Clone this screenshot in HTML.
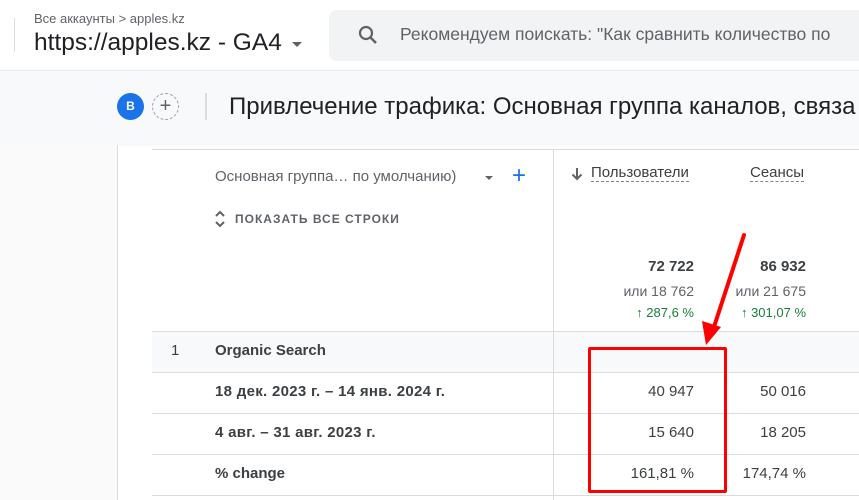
<!DOCTYPE html>
<html><head><meta charset="utf-8"><style>
body{margin:0;width:859px;height:500px;overflow:hidden;background:#fff;font-family:"Liberation Sans",Roboto,sans-serif;position:relative;color:#202124}
.a{position:absolute;white-space:nowrap}
.hl{position:absolute;background:#dadce0}
.num{position:absolute;text-align:right;font-size:15px;color:#3c4043}
</style></head><body>
<div class="hl" style="left:14px;top:18px;width:1px;height:34px"></div>
<div class="a" style="left:34px;top:11px;font-size:13px;color:#5f6368">Все аккаунты &gt; apples.kz</div>
<div class="a" style="left:34px;top:29px;font-size:24.5px;color:#202124">https://apples.kz - GA4</div>
<div class="a" style="left:292px;top:42px;width:0;height:0;border-left:5px solid transparent;border-right:5px solid transparent;border-top:5px solid #5f6368"></div>
<div class="a" style="left:329px;top:10px;width:540px;height:51px;background:#f1f3f4;border-radius:8px"></div>
<svg class="a" style="left:356px;top:23px" width="24" height="24" viewBox="0 0 24 24"><circle cx="10" cy="10" r="6" fill="none" stroke="#5f6368" stroke-width="2.2"/><path d="M14.5 14.5L20 20" stroke="#5f6368" stroke-width="2.5"/></svg>
<div class="a" style="left:400px;top:24px;font-size:17.5px;color:#5f6368">Рекомендуем поискать: "Как сравнить количество по</div>
<div class="a" style="left:0;top:70px;width:859px;height:75px;background:#f8f9fa;border-top:1px solid #e8eaed"></div>
<div class="a" style="left:0;top:145px;width:117px;height:355px;background:#fafafa"></div>
<div class="hl" style="left:117px;top:145px;width:1px;height:355px"></div>
<div class="a" style="left:117px;top:93px;width:27px;height:27px;border-radius:50%;background:#1a73e8;color:#fff;font-size:12px;font-weight:bold;text-align:center;line-height:27px">B</div>
<div class="a" style="left:152px;top:93px;width:25px;height:25px;border-radius:50%;border:1px dashed #9aa0a6;color:#5f6368;font-size:20px;text-align:center;line-height:24px">+</div>
<div class="hl" style="left:205px;top:93px;width:2px;height:27px"></div>
<div class="a" style="left:229px;top:93px;font-size:24px;color:#202124">Привлечение трафика: Основная группа каналов, связа</div>
<div class="hl" style="left:152px;top:149px;width:707px;height:1px"></div>
<div class="hl" style="left:553px;top:150px;width:1px;height:350px"></div>
<div class="a" style="left:215px;top:168px;font-size:15px;color:#5f6368">Основная группа… по умолчанию)</div>
<div class="a" style="left:485px;top:176px;border-left:4px solid transparent;border-right:4px solid transparent;border-top:4px solid #5f6368"></div>
<div class="a" style="left:512px;top:162px;font-size:24px;color:#1a73e8">+</div>
<svg class="a" style="left:214px;top:210px" width="12" height="18" viewBox="0 0 12 18"><path d="M2 6L6 2L10 6M2 12L6 16L10 12" fill="none" stroke="#5f6368" stroke-width="2"/></svg>
<div class="a" style="left:235px;top:212px;font-size:12px;font-weight:bold;letter-spacing:1px;color:#5f6368">ПОКАЗАТЬ ВСЕ СТРОКИ</div>
<svg class="a" style="left:571px;top:167px" width="12" height="14" viewBox="0 0 12 14"><path d="M6 1V12M1.5 7.5L6 12L10.5 7.5" fill="none" stroke="#5f6368" stroke-width="2"/></svg>
<div class="a" style="left:591px;top:164px;font-size:15px;color:#3c4043;border-bottom:1px dashed #80868b">Пользователи</div>
<div class="a" style="left:750px;top:164px;font-size:15px;color:#3c4043;border-bottom:1px dashed #80868b">Сеансы</div>
<div class="num" style="right:165px;top:258px;font-weight:bold">72 722</div>
<div class="num" style="right:53px;top:258px;font-weight:bold">86 932</div>
<div class="num" style="right:165px;top:283px;font-size:14px;color:#5f6368">или 18 762</div>
<div class="num" style="right:53px;top:283px;font-size:14px;color:#5f6368">или 21 675</div>
<div class="num" style="right:165px;top:305px;font-size:13px;color:#188038">↑ 287,6 %</div>
<div class="num" style="right:53px;top:305px;font-size:13px;color:#188038">↑ 301,07 %</div>
<div class="a" style="left:152px;top:332px;width:707px;height:40px;background:#f8f9fa"></div>
<div class="hl" style="left:553px;top:332px;width:1px;height:40px"></div>
<div class="hl" style="left:152px;top:331px;width:707px;height:1px"></div>
<div class="hl" style="left:152px;top:372px;width:707px;height:1px"></div>
<div class="hl" style="left:152px;top:413px;width:707px;height:1px"></div>
<div class="hl" style="left:152px;top:454px;width:707px;height:1px"></div>
<div class="hl" style="left:152px;top:495px;width:707px;height:1px"></div>
<div class="a" style="left:171px;top:342px;font-size:15px;color:#3c4043">1</div>
<div class="a" style="left:215px;top:342px;font-size:15px;font-weight:bold;color:#3c4043">Organic Search</div>
<div class="a" style="left:215px;top:383px;font-size:15px;font-weight:bold;color:#3c4043;letter-spacing:0.3px">18 дек. 2023 г. – 14 янв. 2024 г.</div>
<div class="a" style="left:215px;top:424px;font-size:15px;font-weight:bold;color:#3c4043;letter-spacing:0.3px">4 авг. – 31 авг. 2023 г.</div>
<div class="a" style="left:215px;top:465px;font-size:15px;font-weight:bold;color:#3c4043">% change</div>
<div class="num" style="right:165px;top:383px">40 947</div>
<div class="num" style="right:53px;top:383px">50 016</div>
<div class="num" style="right:165px;top:424px">15 640</div>
<div class="num" style="right:53px;top:424px">18 205</div>
<div class="num" style="right:165px;top:465px">161,81 %</div>
<div class="num" style="right:53px;top:465px">174,74 %</div>
<div class="a" style="left:588px;top:347px;width:133px;height:140px;border:3px solid #ff0000;border-radius:2px"></div>
<svg class="a" style="left:690px;top:225px" width="70" height="130" viewBox="0 0 70 130"><path d="M54 10L22 108" stroke="#ff0000" stroke-width="4" stroke-linecap="round"/><path d="M16 120L12 96L31 102Z" fill="#ff0000"/></svg>
</body></html>
